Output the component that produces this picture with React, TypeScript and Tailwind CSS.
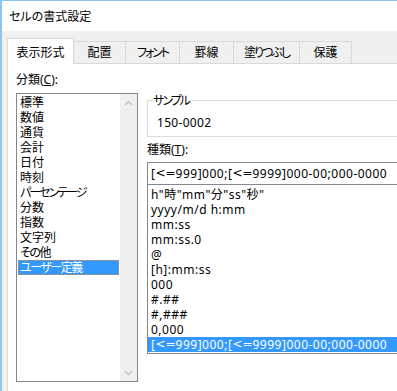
import React from "react";

function Fmt({ text }: { text: string }) {
  const parts: React.ReactNode[] = [];
  let buf = "";
  let k = 0;
  for (const ch of text) {
    if (ch === "<" || ch === "=") {
      if (buf) {
        parts.push(<span key={k++}>{buf}</span>);
        buf = "";
      }
      parts.push(
        <span key={k++} className="font-['DejaVu_Sans',sans-serif] tracking-normal">
          {ch}
        </span>
      );
    } else {
      buf += ch;
    }
  }
  if (buf) parts.push(<span key={k++}>{buf}</span>);
  return <>{parts}</>;
}

export default function App() {
  const categories = [
    { t: "標準", c: "" },
    { t: "数値", c: "" },
    { t: "通貨", c: "" },
    { t: "会計", c: "" },
    { t: "日付", c: "" },
    { t: "時刻", c: "" },
    { t: "パーセンテージ", c: "tracking-[-2px]" },
    { t: "分数", c: "" },
    { t: "指数", c: "" },
    { t: "文字列", c: "" },
    { t: "その他", c: "tracking-[-1.5px]" },
    { t: "ユーザー定義", c: "tracking-[-1.5px]" },
  ];
  const formats = [
    'h"時"mm"分"ss"秒"',
    "yyyy/m/d h:mm",
    "mm:ss",
    "mm:ss.0",
    "@",
    "[h]:mm:ss",
    "000",
    "#.##",
    "#,###",
    "0,000",
    "[<=999]000;[<=9999]000-00;000-0000",
  ];
  const tabs = [
    { label: "配置", w: "w-[52px]", c: "" },
    { label: "フォント", w: "w-[54px]", c: "tracking-[-2px]" },
    { label: "罫線", w: "w-[54px]", c: "" },
    { label: "塗りつぶし", w: "w-[66px]", c: "tracking-[-2px]" },
    { label: "保護", w: "w-[52px]", c: "" },
  ];

  return (
    <div className="w-[397px] h-[391px] overflow-hidden bg-[#f0f0f0] border-l-2 border-t border-[#8cc4f2] flex flex-col font-['Noto_Sans','Noto_Sans_CJK_JP',sans-serif] [font-feature-settings:'palt'] text-[12px] leading-[15px] text-black">
      <div className="h-[30px] shrink-0 bg-white flex items-center pl-[7px]">セルの書式設定</div>
      <div className="flex-1 min-h-0 flex flex-col pl-[5px] pt-[7px]">
        <div className="flex items-end h-[26px] -mb-px relative z-10 shrink-0">
          <div className="w-[67px] h-[26px] bg-white border-x border-t border-[#d9d9d9] flex items-center justify-center pt-[2px]">
            表示形式
          </div>
          {tabs.map((t) => (
            <div
              key={t.label}
              className={`${t.w} h-[22px] mb-px border-t border-r border-[#d9d9d9] flex items-center justify-center`}
            >
              <span className={t.c}>{t.label}</span>
            </div>
          ))}
        </div>
        <div className="flex-1 w-[600px] bg-white border-l border-t border-[#d9d9d9] flex">
          <div className="flex flex-col pl-[8px] pt-[8px]">
            <div className="h-[15px]">
              分類(<span className="underline">C</span>):
            </div>
            <div className="mt-[6px] w-[122px] h-[289px] border border-[#828790] flex">
              <div className="flex-1 flex flex-col px-[1px] pt-[1px]">
                {categories.map((c) => {
                  const sel = c.t === "ユーザー定義";
                  return (
                    <div
                      key={c.t}
                      className={
                        sel
                          ? "h-[15px] flex items-center pl-[1px] bg-[#3399ff] text-white border border-dotted border-[#d8893a]"
                          : "h-[15px] flex items-center pl-[1px] border border-transparent"
                      }
                    >
                      <span className={c.c}>{c.t}</span>
                    </div>
                  );
                })}
              </div>
              <div className="w-[17px] bg-[#f0f0f0] flex flex-col justify-between">
                <div className="h-[17px] flex items-center justify-center">
                  <svg width="9" height="6" viewBox="0 0 9 6">
                    <path d="M1 5 L4.5 1.5 L8 5" fill="none" stroke="#c2c2c2" strokeWidth="1.5" />
                  </svg>
                </div>
                <div className="h-[17px] flex items-center justify-center">
                  <svg width="9" height="6" viewBox="0 0 9 6">
                    <path d="M1 1 L4.5 4.5 L8 1" fill="none" stroke="#c2c2c2" strokeWidth="1.5" />
                  </svg>
                </div>
              </div>
            </div>
          </div>
          <div className="ml-[9px] w-[300px] flex flex-col pt-[29px]">
            <fieldset className="border border-[#dcdcdc]">
              <legend className="ml-[5px] leading-[15px] tracking-[-2px] pr-[2px]">サンプル</legend>
              <div className="pl-[9px] pt-[7px] pb-[6px] h-[28px] tracking-[0.3px]">150-0002</div>
            </fieldset>
            <div className="mt-[5px] h-[15px]">
              種類(<span className="underline">T</span>):
            </div>
            <div className="mt-[5px] h-[22px] border-t border-x border-[#828790] flex items-center pl-[3px] tracking-[0.5px]">
              <Fmt text="[<=999]000;[<=9999]000-00;000-0000" />
            </div>
            <div className="h-[170px] border border-[#828790] pt-[2px] flex flex-col tracking-[0.5px]">
              {formats.map((f, i) => (
                <div
                  key={i}
                  className={
                    i === formats.length - 1
                      ? "h-[15px] flex items-center pl-[3px] bg-[#3399ff] text-white"
                      : "h-[15px] flex items-center pl-[3px]"
                  }
                >
                  <Fmt text={f} />
                </div>
              ))}
            </div>
          </div>
        </div>
      </div>
    </div>
  );
}
